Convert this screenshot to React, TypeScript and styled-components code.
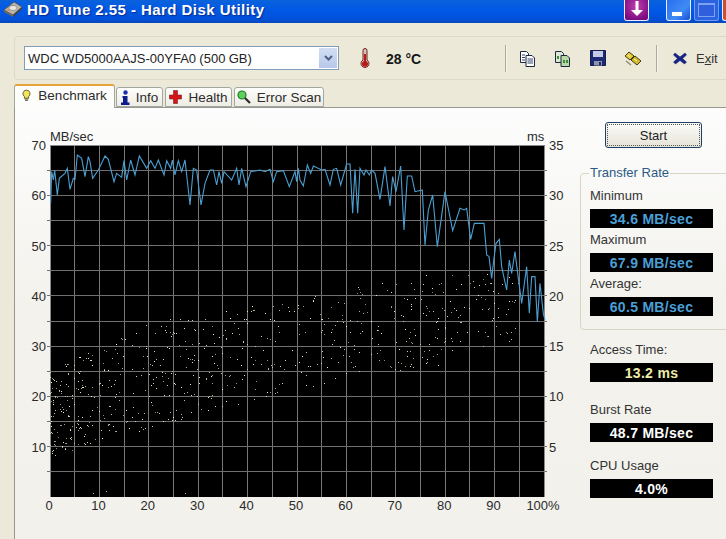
import { createGlobalStyle } from "styled-components";
import styled from "styled-components";

const GlobalStyle = createGlobalStyle`
  html, body {
    margin: 0;
    padding: 0;
    overflow: hidden;
    background: #ece9d8;
  }
`;

const trace1 = [
  [32, 190], [35, 95], [40, 120], [44, 90], [52, 165], [58, 115], [75, 100], [82, 85], [90, 148], [100, 115], [105, 118],
  [112, 45], [125, 55], [135, 110], [145, 50], [150, 65], [158, 115], [175, 90], [195, 48], [205, 58], [222, 125], [230, 100],
  [245, 112], [252, 62], [260, 120], [272, 60], [285, 105], [298, 48], [320, 85], [332, 62], [345, 85], [355, 60], [372, 105],
  [380, 62], [392, 85], [397, 60], [405, 105], [415, 62], [425, 95], [435, 60], [450, 195], [460, 85], [470, 90], [483, 195],
  [495, 130], [510, 90], [520, 90], [530, 135], [537, 95], [545, 130], [552, 95], [575, 120], [590, 85], [597, 135], [605, 85],
  [618, 140], [632, 95], [660, 90], [675, 95], [690, 88], [700, 125], [710, 95], [730, 92], [748, 140],
].map(([x, y]) => [40 + x / 3, 140 + y / 3]);

const trace2 = [
  [15, 95], [20, 125], [25, 85], [30, 120], [40, 138], [52, 75], [62, 100], [70, 78], [95, 90], [105, 88], [120, 135], [130, 88],
  [140, 85], [152, 135], [170, 72], [180, 72], [188, 220], [195, 88], [203, 220], [210, 85], [222, 105], [228, 90], [238, 105],
  [245, 90], [255, 100], [270, 178], [285, 80], [300, 198], [308, 110], [318, 155], [332, 78], [342, 270], [352, 108], [365, 108],
  [375, 155], [397, 150], [405, 315], [415, 210], [428, 165], [442, 320], [465, 155], [488, 272], [510, 205], [522, 210], [530, 205],
  [542, 298], [553, 250], [582, 250], [590, 345], [597, 350], [605, 415], [612, 355], [618, 310], [628, 298], [635, 380], [650, 450],
  [658, 360], [665, 400], [675, 335], [685, 415], [695, 490], [710, 380], [718, 520], [725, 410], [735, 410], [742, 545], [750, 430],
  [760, 520], [765, 540],
].map(([x, y]) => [290 + x / 3, 140 + y / 3]);

const tracePoints = [...trace1, ...trace2].map((p) => p.join(",")).join(" ");

const lerp = (stops: number[][], x: number) => {
  for (let i = 1; i < stops.length; i++) {
    if (x <= stops[i][0]) {
      const t = (x - stops[i - 1][0]) / (stops[i][0] - stops[i - 1][0]);
      return stops[i - 1][1] + t * (stops[i][1] - stops[i - 1][1]);
    }
  }
  return stops[stops.length - 1][1];
};

const upperEdge = [[50, 372], [92, 345], [150, 322], [210, 312], [300, 296], [400, 274], [545, 272]];
const lowerEdge = [[50, 458], [100, 442], [150, 428], [200, 416], [250, 402], [300, 390], [360, 378], [430, 368], [545, 330]];

const makeDots = () => {
  let seed = 90871;
  const next = () => {
    seed = (seed * 48271) % 2147483647;
    return seed / 2147483647;
  };
  const dots: { x: number; y: number; o: number }[] = [];
  for (let i = 0; i < 680; i++) {
    // fewer samples towards the end of the disk
    const x = 50 + Math.pow(next(), 1.45) * 470;
    const top = lerp(upperEdge, x);
    const bottom = lerp(lowerEdge, x);
    dots.push({ x: Math.round(x), y: Math.round(top + next() * (bottom - top)), o: 0.55 + next() * 0.45 });
  }
  return [...dots, { x: 93, y: 493, o: 0.7 }, { x: 106, y: 491, o: 0.7 }, { x: 185, y: 493, o: 0.7 }];
};

const dots = makeDots();

const plot = { left: 50, right: 544, top: 145, bottom: 497 };
const xAt = (pct: number) => plot.left + ((plot.right - plot.left) * pct) / 100;
const yAt = (mb: number) => plot.bottom - ((plot.bottom - plot.top) * mb) / 70;

const TransferChart = () => {
  const xSteps = Array.from({ length: 21 }, (_, i) => i * 5);
  const ySteps = Array.from({ length: 15 }, (_, i) => i * 5);
  return (
    <ChartSvg viewBox="15 108 565 420" width={565} height={420}>
      <rect x={plot.left} y={plot.top} width={plot.right - plot.left} height={plot.bottom - plot.top} fill="#000" />
      {xSteps.slice(1, -1).map((p) => (
        <line key={p} x1={xAt(p)} x2={xAt(p)} y1={plot.top} y2={plot.bottom} stroke="#777" shapeRendering="crispEdges" />
      ))}
      {ySteps.slice(1, -1).map((v) => (
        <line key={v} x1={plot.left - 3} x2={plot.right + 3} y1={yAt(v)} y2={yAt(v)} stroke="#6f6f6f" shapeRendering="crispEdges" />
      ))}
      <path d={`M${plot.left} ${plot.bottom}V${plot.top}H${plot.right}V${plot.bottom}`} fill="none" stroke="#8a8a8a" shapeRendering="crispEdges" />
      {dots.map((d, i) => (
        <rect key={i} x={d.x} y={d.y} width={1} height={1} fill="#f6f6cc" opacity={d.o} />
      ))}
      <polyline points={tracePoints} fill="none" stroke="#4b9fd2" strokeWidth={1.1} />
      <text x={50} y={141}>MB/sec</text>
      <text x={527} y={141}>ms</text>
      {[10, 20, 30, 40, 50, 60, 70].map((v) => (
        <text key={v} x={46} y={yAt(v) + 5} textAnchor="end">{v}</text>
      ))}
      {[5, 10, 15, 20, 25, 30, 35].map((v) => (
        <text key={v} x={549} y={yAt(v * 2) + 5}>{v}</text>
      ))}
      {[0, 10, 20, 30, 40, 50, 60, 70, 80, 90].map((p) => (
        <text key={p} x={xAt(p) - 1} y={510} textAnchor="middle">{p}</text>
      ))}
      <text x={543} y={510} textAnchor="middle">100%</text>
    </ChartSvg>
  );
};

const AppIcon = () => (
  <svg width="20" height="18" viewBox="0 0 20 18">
    <path d="M1 10 11 2l8 5-9 8z" fill="#b9b6ad" stroke="#55534e" strokeWidth=".8" />
    <path d="M1 10l9 5v2l-9-5z" fill="#6d6a62" />
    <path d="M10 15l9-8v2l-9 8z" fill="#45433f" />
    <ellipse cx="10" cy="8" rx="4" ry="2.6" fill="#e8e6df" stroke="#77746b" strokeWidth=".6" />
    <path d="M3 10l3-1 1 2z" fill="#d9862d" />
  </svg>
);

const Thermometer = () => (
  <svg width="12" height="20" viewBox="0 0 12 20">
    <path d="M4 2.5a2 2 0 0 1 4 0v9.500a4 4 0 1 1-4 0z" fill="#d9c0b8" stroke="#6e211d" strokeWidth="1" />
    <path d="M5 6h2v7a3 3 0 1 1-2 0z" fill="#b81a18" />
  </svg>
);

const PagesIcon = ({ tint }: { tint?: boolean }) => (
  <svg width="17" height="17" viewBox="0 0 17 17">
    <path d="M1.500 1.500h6l2 2v9h-8z" fill={tint ? "#dbe8d2" : "#fff"} stroke="#1e2640" />
    <path d="M7 5.500h6l2.500 2.500v8.500H7z" fill={tint ? "#b8d8a8" : "#fff"} stroke="#1e2640" />
    {tint ? (
      <path d="M3 6h2v3H3zM9 10h2v3H9zM12 10h2v3h-2z" fill="#3d8a3d" />
    ) : (
      <path d="M3 5h3M3 7.500h3M3 10h3M8.500 9h5.500M8.500 11h5.500M8.500 13h5.500" stroke="#33446e" />
    )}
  </svg>
);

const SaveIcon = () => (
  <svg width="16" height="16" viewBox="0 0 16 16">
    <path d="M.5.500h15v15H.5z" fill="#1e2a74" stroke="#141c50" />
    <path d="M3 1h10v6H3z" fill="#c3cbe6" />
    <path d="M4 11h8v4.500H4z" fill="#8e95a8" />
    <path d="M9 12h2v3H9z" fill="#1e2a74" />
  </svg>
);

const ChainIcon = () => (
  <svg width="18" height="17" viewBox="0 0 18 17">
    <path d="M1 6l4-4 5 4-4 4z" fill="#e4cc30" stroke="#3f3b1c" />
    <path d="M7 10l4-4 6 5-4 4z" fill="#d4ba28" stroke="#3f3b1c" />
    <path d="M4 5l2 2M10 9l3 2" stroke="#fff5a8" />
    <path d="M2 11l5 4" stroke="#8c8a70" strokeWidth="1.500" />
  </svg>
);

const CloseIcon = () => (
  <svg width="14" height="13" viewBox="0 0 14 13">
    <path d="M2 1l5 4 5-4 1.500 2-4 3.500 4 3.500-2 2-4.500-3.500L2.500 12l-2-2 4-3.500L.500 3z" fill="#14248a" stroke="#0c1660" strokeWidth=".5" />
  </svg>
);

const BulbIcon = () => (
  <svg width="9" height="13" viewBox="0 0 10 13">
    <path d="M5 .5a4 4 0 0 1 2.300 7.200V9.500H2.700V7.700A4 4 0 0 1 5 .5z" fill="#f4e65a" stroke="#54502a" />
    <path d="M3 10.500h4M3.500 12h3" stroke="#54502a" />
  </svg>
);

const InfoIcon = () => (
  <svg width="9" height="15" viewBox="0 0 9 15">
    <circle cx="4.500" cy="2.500" r="2.200" fill="#1830b0" />
    <path d="M1.500 6h5v6.500h2V15H0v-2.500h2V8H1.500z" fill="#0c1c8c" />
  </svg>
);

const PlusIcon = () => (
  <svg width="13" height="14" viewBox="0 0 13 14">
    <path d="M4.500.5h4v4.500H12.500v4H8.500v4.500h-4V9H.5V5h4z" fill="#d4161a" stroke="#7a1c1c" strokeWidth=".6" />
  </svg>
);

const ScanIcon = () => (
  <svg width="14" height="14" viewBox="0 0 14 14">
    <circle cx="5" cy="5" r="4" fill="#5ed05e" stroke="#1f7a2b" strokeWidth="1.200" />
    <path d="M8 8l5 5" stroke="#2c2c2c" strokeWidth="2.200" />
  </svg>
);

const App = () => {
  return (
    <>
      <GlobalStyle />
      <Page>
        <TitleBar>
          <AppIcon />
          <TitleText>HD Tune 2.55 - Hard Disk Utility</TitleText>
          <TitleButtons>
            <ArrowButton>
              <svg width="16" height="16" viewBox="0 0 16 16">
                <path d="M6.500 0h3v9H14l-6 6-6-6h4.500z" fill="#fff" />
              </svg>
            </ArrowButton>
            <MinButton />
            <MaxButton />
            <CloseButton />
          </TitleButtons>
        </TitleBar>

        <ToolbarFrame>
          <DriveSelect>
            <DriveName>WDC WD5000AAJS-00YFA0 (500 GB)</DriveName>
            <DropButton>
              <svg width="9" height="7" viewBox="0 0 9 7">
                <path d="M1 1l3.500 3.500L8 1" fill="none" stroke="#4d6185" strokeWidth="2" />
              </svg>
            </DropButton>
          </DriveSelect>
          <TempIcon>
            <Thermometer />
          </TempIcon>
          <Temperature>28 °C</Temperature>
          <ToolSeparator />
          <ToolGroup>
            <ToolIcon><PagesIcon /></ToolIcon>
            <ToolIcon><PagesIcon tint /></ToolIcon>
            <ToolIcon><SaveIcon /></ToolIcon>
            <ToolIcon><ChainIcon /></ToolIcon>
          </ToolGroup>
          <ToolSeparator />
          <ExitButton>
            <CloseIcon />
            <span>E<u>x</u>it</span>
          </ExitButton>
        </ToolbarFrame>

        <TabRow>
          <Tab $active $width={101}><BulbIcon />Benchmark</Tab>
          <Tab $width={47}><InfoIcon />Info</Tab>
          <Tab $width={67}><PlusIcon />Health</Tab>
          <Tab $width={90}><ScanIcon />Error Scan</Tab>
        </TabRow>

        <Panel>
          <TransferChart />
          <SideColumn>
            <StartButton>Start</StartButton>
            <RateGroup>
              <RateLegend>Transfer Rate</RateLegend>
              <Stat $after={3}>
                <StatLabel>Minimum</StatLabel>
                <StatValue $color="#4a9fd6">34.6 MB/sec</StatValue>
              </Stat>
              <Stat $after={3}>
                <StatLabel>Maximum</StatLabel>
                <StatValue $color="#4a9fd6">67.9 MB/sec</StatValue>
              </Stat>
              <Stat $after={0}>
                <StatLabel>Average:</StatLabel>
                <StatValue $color="#4a9fd6">60.5 MB/sec</StatValue>
              </Stat>
            </RateGroup>
            <LowerStats>
              <Stat $after={19}>
                <StatLabel>Access Time:</StatLabel>
                <StatValue $color="#eeeeaa">13.2 ms</StatValue>
              </Stat>
              <Stat $after={15}>
                <StatLabel>Burst Rate</StatLabel>
                <StatValue $color="#fff">48.7 MB/sec</StatValue>
              </Stat>
              <Stat $after={0}>
                <StatLabel>CPU Usage</StatLabel>
                <StatValue $color="#fff">4.0%</StatValue>
              </Stat>
            </LowerStats>
          </SideColumn>
        </Panel>
      </Page>
    </>
  );
};

const Page = styled.div`
  width: 726px;
  height: 539px;
  overflow: hidden;
  display: flex;
  flex-direction: column;
  background: #ece9d8;
  font-family: "Liberation Sans", Arial, sans-serif;
  font-size: 13px;
  color: #2a2a2a;
`;

const TitleBar = styled.div`
  height: 23px;
  flex: none;
  display: flex;
  align-items: flex-start;
  padding-left: 3px;
  background: linear-gradient(to bottom, #0a62dc 0%, #0058e6 45%, #0050d8 85%, #0a48b8 100%);
`;

const TitleText = styled.div`
  margin: 1px 0 0 4px;
  font-size: 15px;
  line-height: 18px;
  font-weight: bold;
  letter-spacing: 0.45px;
  color: #fff;
  text-shadow: 1px 1px 1px #0a2a90;
  white-space: nowrap;
`;

const TitleButtons = styled.div`
  margin-left: auto;
  display: flex;
`;

const WindowButton = styled.div`
  width: 25px;
  height: 21px;
  box-sizing: border-box;
  border: 1px solid #e8eefc;
  border-top: none;
  border-radius: 0 0 3px 3px;
`;

const ArrowButton = styled(WindowButton)`
  margin-right: 17px;
  display: flex;
  align-items: flex-end;
  justify-content: center;
  padding-bottom: 3px;
  background: radial-gradient(circle at 50% 30%, #c040b0, #7c0a80 80%);
`;

const MinButton = styled(WindowButton)`
  margin-right: 3px;
  position: relative;
  background: linear-gradient(135deg, #2a6cf0, #3f8cf4 60%, #1a4cd8);

  &::after {
    content: "";
    position: absolute;
    left: 5px;
    bottom: 4px;
    width: 10px;
    height: 4px;
    background: #fff;
  }
`;

const MaxButton = styled(WindowButton)`
  margin-right: 3px;
  position: relative;
  border-color: #6f9cf0;
  background: #2a62e0;

  &::after {
    content: "";
    position: absolute;
    inset: 3px 3px 3px 3px;
    border: 1px solid #7aa2f0;
    border-top-width: 2px;
    background: #2f5fdc;
  }
`;

const CloseButton = styled(WindowButton)`
  width: 4px;
  border-right: none;
  border-radius: 0 0 0 3px;
  background: #c8502a;
`;

const ToolbarFrame = styled.div`
  margin: 13px -10px 0 14px;
  height: 44px;
  flex: none;
  box-sizing: border-box;
  display: flex;
  align-items: center;
  padding-left: 9px;
  border: 1px solid #dcd9c6;
  border-radius: 4px;
`;

const DriveSelect = styled.div`
  width: 315px;
  height: 24px;
  flex: none;
  box-sizing: border-box;
  display: flex;
  align-items: center;
  justify-content: space-between;
  padding: 0 1px 0 3px;
  border: 1px solid #7f9db9;
  background: #fff;
`;

const DriveName = styled.span`
  font-size: 13px;
  word-spacing: -0.3px;
  color: #222;
  white-space: nowrap;
`;

const DropButton = styled.div`
  width: 18px;
  height: 20px;
  display: flex;
  align-items: center;
  justify-content: center;
  background: linear-gradient(to bottom, #d2def4, #b6c8ea);
`;

const TempIcon = styled.div`
  margin-left: 20px;
  display: flex;
`;

const Temperature = styled.div`
  margin: 1px 0 0 15px;
  width: 119px;
  font-weight: bold;
  font-size: 14px;
  color: #161616;
`;

const ToolSeparator = styled.div`
  width: 1px;
  height: 27px;
  flex: none;
  background: #aaa99c;
  border-right: 1px solid #f6f5ee;
`;

const ToolGroup = styled.div`
  display: flex;
  padding: 0 6px 0 3px;
`;

const ToolIcon = styled.div`
  width: 35px;
  flex: none;
  display: flex;
  justify-content: center;
`;

const ExitButton = styled.div`
  margin-left: 15px;
  display: flex;
  align-items: center;
  gap: 9px;
  color: #333;
  font-size: 13px;
`;

const TabRow = styled.div`
  margin: 4px 0 0 14px;
  height: 23px;
  flex: none;
  display: flex;
  align-items: flex-end;
  position: relative;
  z-index: 1;
`;

const Tab = styled.div<{ $active?: boolean; $width: number }>`
  width: ${(p) => p.$width}px;
  height: ${(p) => (p.$active ? 24 : 20)}px;
  margin-bottom: ${(p) => (p.$active ? -1 : 0)}px;
  margin-right: ${(p) => (p.$active ? 1 : 2)}px;
  box-sizing: border-box;
  display: flex;
  align-items: center;
  justify-content: center;
  gap: ${(p) => (p.$active ? 7 : 6)}px;
  padding-bottom: ${(p) => (p.$active ? 3 : 0)}px;
  border: 1px solid #a2a89f;
  border-bottom: ${(p) => (p.$active ? "none" : "1px solid #a2a89f")};
  border-top: ${(p) => (p.$active ? "2px solid #e9a13a" : "1px solid #a2a89f")};
  border-radius: 3px 3px 0 0;
  background: ${(p) => (p.$active ? "#fdfdfc" : "linear-gradient(to bottom, #fdfdfb, #eeece4)")};
  font-size: 13.5px;
  color: #2c2c2c;
  white-space: nowrap;
`;

const Panel = styled.div`
  margin-left: 14px;
  flex: 1;
  min-height: 0;
  display: flex;
  overflow: hidden;
  border-top: 1px solid #97978f;
  border-left: 1px solid #97978f;
  background: linear-gradient(to bottom, #fdfdfd 0%, #f3f2ed 45%, #f2f1ec 100%);
`;

const ChartSvg = styled.svg`
  flex: none;
  display: block;

  text {
    font-family: "Liberation Sans", Arial, sans-serif;
    font-size: 13px;
    fill: #2a2a2a;
  }
`;

const SideColumn = styled.div`
  width: 146px;
  flex: none;
  padding-top: 14px;
`;

const StartButton = styled.div`
  margin-left: 25px;
  width: 97px;
  height: 26px;
  box-sizing: border-box;
  display: flex;
  align-items: center;
  justify-content: center;
  border: 1px solid #1f3f66;
  border-radius: 3px;
  outline: 1px dotted #555;
  outline-offset: -3px;
  background: linear-gradient(to bottom, #fbfbf8, #e6e4d8);
  font-size: 13px;
  color: #222;
`;

const RateGroup = styled.fieldset`
  margin: 17px -20px 0 0;
  min-width: 0;
  height: 165px;
  box-sizing: border-box;
  padding: 6px 0 0 9px;
  border: 1px solid #d8d5c2;
  border-radius: 4px;
`;

const RateLegend = styled.legend`
  margin-left: -1px;
  padding: 0 1px;
  font-size: 13px;
  line-height: 16px;
  color: #2b5a86;
`;

const LowerStats = styled.div`
  margin-top: 11px;
  padding-left: 10px;
`;

const Stat = styled.div<{ $after: number }>`
  display: flex;
  flex-direction: column;
  gap: 5px;
  margin-bottom: ${(p) => p.$after}px;
`;

const StatLabel = styled.div`
  font-size: 13px;
  line-height: 17px;
  height: 17px;
  color: #333;
`;

const StatValue = styled.div<{ $color: string }>`
  width: 123px;
  height: 19px;
  display: flex;
  align-items: center;
  justify-content: center;
  background: #000;
  font-size: 14px;
  font-weight: bold;
  letter-spacing: 0.3px;
  color: ${(p) => p.$color};
`;

export default App;
